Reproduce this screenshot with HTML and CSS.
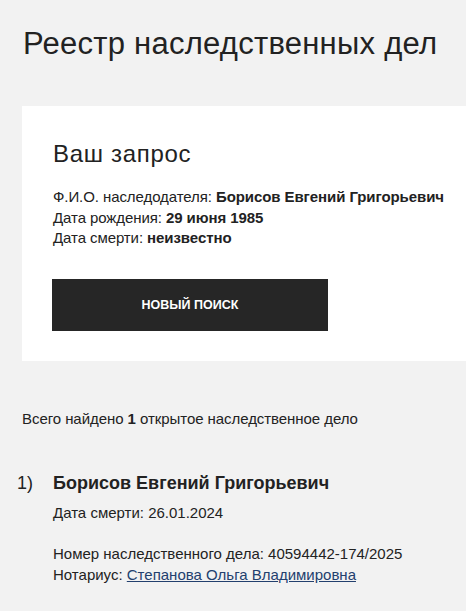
FILE: index.html
```html
<!DOCTYPE html>
<html lang="ru">
<head>
<meta charset="utf-8">
<title>Реестр наследственных дел</title>
<link rel="stylesheet" href="styles.css">
</head>
<body>
<main class="page">
  <h1 class="title">Реестр наследственных дел</h1>
  <section class="card">
    <h2 class="card-title">Ваш запрос</h2>
    <div class="info">
      <div>Ф.И.О. наследодателя: <b>Борисов Евгений Григорьевич</b></div>
      <div>Дата рождения: <b>29 июня 1985</b></div>
      <div>Дата смерти: <b>неизвестно</b></div>
    </div>
    <button class="btn" type="button">НОВЫЙ ПОИСК</button>
  </section>
  <p class="summary">Всего найдено <b>1</b> открытое наследственное дело</p>
  <ol class="cases">
    <li class="case">
      <span class="case-num">1)</span>
      <div class="case-body">
        <div class="case-name">Борисов Евгений Григорьевич</div>
        <div class="case-line">Дата смерти: 26.01.2024</div>
        <div class="case-meta">
          <div>Номер наследственного дела: 40594442-174/2025</div>
          <div>Нотариус: <a class="link" href="#">Степанова Ольга Владимировна</a></div>
        </div>
      </div>
    </li>
  </ol>
</main>
</body>
</html>
```
FILE: styles.css
```css
html, body {
  margin: 0;
  padding: 0;
  background: #f2f2f2;
}
body {
  font-family: "Liberation Sans", Arial, sans-serif;
  color: #222222;
}
.page {
  padding: 27px 0 0 22px;
}
.title {
  margin: 0 0 45px 1px;
  font-size: 31px;
  line-height: 34px;
  font-weight: 400;
  letter-spacing: 0.25px;
  color: #222222;
}
.card {
  background: #ffffff;
  padding: 35px 0 30px 31px;
}
.card-title {
  margin: 0 0 20px;
  font-size: 24px;
  line-height: 26px;
  font-weight: 400;
  letter-spacing: 0.7px;
}
.info {
  font-size: 15px;
  line-height: 20.5px;
  letter-spacing: -0.08px;
}
.info b {
  font-weight: 700;
}
.btn {
  display: block;
  margin: 30px 0 0 -1px;
  width: 276px;
  height: 52px;
  border: 0;
  background: #262626;
  color: #ffffff;
  font-family: "Liberation Sans", Arial, sans-serif;
  font-size: 12.5px;
  font-weight: 700;
  letter-spacing: 0;
}
.summary {
  margin: 47px 0 0;
  font-size: 15px;
  line-height: 21px;
  letter-spacing: -0.06px;
}
.cases {
  list-style: none;
  margin: 43px 0 0;
  padding: 0;
}
.case {
  display: flex;
}
.case-num {
  width: 31px;
  margin-left: -5px;
  padding-right: 5px;
  font-size: 18px;
  line-height: 22px;
}
.case-name {
  font-size: 18px;
  line-height: 22px;
  font-weight: 700;
}
.case-line {
  margin-top: 8px;
  font-size: 15px;
  line-height: 21px;
}
.case-meta {
  margin-top: 20px;
  font-size: 15px;
  line-height: 21px;
}
.link {
  color: #23406e;
  text-decoration: underline;
}
```
